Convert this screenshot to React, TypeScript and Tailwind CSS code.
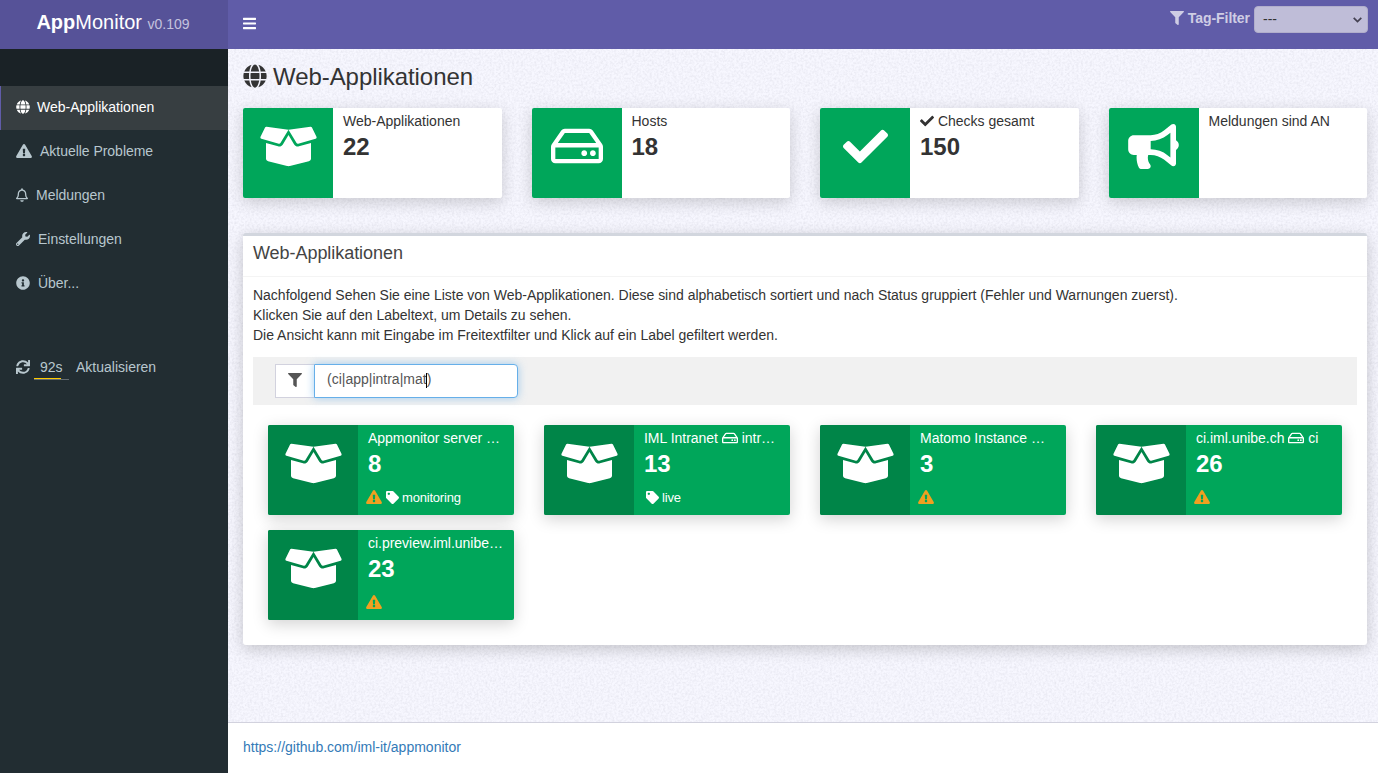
import React from "react";
import {
  FaBars, FaBoxOpen, FaBullhorn, FaCheck, FaExclamationTriangle, FaFilter,
  FaGlobe, FaInfoCircle, FaRegBell, FaRegHdd, FaSync, FaTag, FaWrench,
} from "react-icons/fa";

type Tile = { title: React.ReactNode; count: string; warn?: boolean; tag?: string };

const hdd = <FaRegHdd className="inline h-4 w-4 align-[-3px]" />;

const tiles: Tile[] = [
  { title: "Appmonitor server …", count: "8", warn: true, tag: "monitoring" },
  { title: <>IML Intranet {hdd} intr…</>, count: "13", tag: "live" },
  { title: "Matomo Instance …", count: "3", warn: true },
  { title: <>ci.iml.unibe.ch {hdd} ci</>, count: "26", warn: true },
  { title: "ci.preview.iml.unibe…", count: "23", warn: true },
];

const stats = [
  { icon: <FaBoxOpen className="h-[45px] w-[57px]" />, title: "Web-Applikationen", count: "22" },
  { icon: <FaRegHdd className="h-[52px] w-[52px]" />, title: "Hosts", count: "18" },
  { icon: <FaCheck className="h-[45px] w-[45px]" />, title: <><FaCheck className="inline h-[14px] w-[14px] align-[-2px]" /> Checks gesamt</>, count: "150" },
  { icon: <FaBullhorn className="h-[45px] w-[51px]" />, title: "Meldungen sind AN", count: "" },
];

const nav = [
  { icon: <FaGlobe className="h-[14px] w-[14px]" />, label: "Web-Applikationen", active: true },
  { icon: <FaExclamationTriangle className="h-[14px] w-4" />, label: "Aktuelle Probleme" },
  { icon: <FaRegBell className="h-[14px] w-[12px]" />, label: "Meldungen" },
  { icon: <FaWrench className="h-[14px] w-[14px]" />, label: "Einstellungen" },
  { icon: <FaInfoCircle className="h-[14px] w-[14px]" />, label: "Über..." },
];

function Texture() {
  return (
    <svg className="absolute inset-0 h-full w-full" aria-hidden="true">
      <filter id="paper" x="0" y="0" width="100%" height="100%">
        <feTurbulence type="fractalNoise" baseFrequency="0.45" numOctaves="3" seed="4" />
        <feColorMatrix values="0 0 0 0 0.68  0 0 0 0 0.68  0 0 0 0 0.76  0.9 0 0 0 -0.32" />
      </filter>
      <rect width="100%" height="100%" filter="url(#paper)" />
    </svg>
  );
}

export default function App() {
  return (
    <div className="flex h-[773px] w-[1378px] flex-col overflow-hidden bg-[#222d32] font-['Liberation_Sans',Arial,sans-serif] text-[14px] leading-5 text-[#333]">
      <header className="flex h-[49px] shrink-0 text-white">
        <div className="flex w-[228px] justify-center bg-[#565298] pr-[2px] text-[20px] leading-[45px]">
          <div className="whitespace-pre"><b>App</b>Monitor <span className="text-[14px] text-[#c4c2de]">v0.109</span></div>
        </div>
        <div className="flex flex-1 items-start justify-between bg-[#605ca8]">
          <FaBars className="ml-[15px] mt-[16px] h-[15px] w-[13px]" />
          <div className="flex items-start pr-[10px] pt-[6px]">
            <div className="flex items-center gap-[4px] pt-[2px] font-bold tracking-[-0.05px] text-[#cfcde4]">
              <FaFilter className="h-[14px] w-[14px]" />Tag-Filter
            </div>
            <div className="ml-[4px] flex h-[27px] w-[114px] items-center justify-between rounded-[4px] border border-[#b1aecb] bg-[#bfbdd8] pb-px pl-[8px] pr-[5px] text-[14px] text-[#333]">
              <span>---</span>
              <svg className="mt-[2px] h-[6px] w-[9px]" viewBox="0 0 9 6" fill="none" stroke="#444152" strokeWidth="1.7"><path d="M.7 .8 4.5 4.6 8.3 .8" /></svg>
            </div>
          </div>
        </div>
      </header>
      <div className="flex min-h-0 flex-1">
        <aside className="w-[228px] shrink-0 text-[#b8c7ce]">
          <div className="h-[37px] bg-[#1a2226]" />
          <nav>
            {nav.map((n) => (
              <div key={n.label} className={n.active
                ? "flex h-11 items-center gap-[7px] border-l border-[#605ca8] bg-[#373e41] pb-[2px] pl-[15px] text-white"
                : "flex h-11 items-center gap-[8px] pb-[2px] pl-4 tracking-[-0.03px]"}>
                {n.icon}<span>{n.label}</span>
              </div>
            ))}
          </nav>
          <div className="mt-[40px] flex h-11 items-center pb-[2px] pl-4">
            <FaSync className="h-[14px] w-[14px]" />
            <div className="relative ml-[4px] w-[35px] pl-[6px]">
              92s
              <div className="absolute -bottom-[3px] left-0 h-px w-[35px] bg-[#646c70]" />
              <div className="absolute -bottom-[2px] left-0 h-px w-[27px] bg-[#ffcc00]" />
            </div>
            <span className="ml-[7px]">Aktualisieren</span>
          </div>
        </aside>
        <div className="flex min-w-0 flex-1 flex-col">
          <main className="relative flex-1 bg-[#f7f7ff]">
            <Texture />
            <div className="relative pl-[15px] pr-[11px] pt-[15px]">
              <h1 className="flex h-[26px] items-center gap-[6px] text-[24px] leading-[26px] tracking-[-0.06px]">
                <FaGlobe className="mb-[2px] h-6 w-6" />Web-Applikationen
              </h1>
              <section className="mt-[18px] grid grid-cols-4 gap-[30px]">
                {stats.map((s, i) => (
                  <div key={i} className="flex h-[90px] overflow-hidden rounded-[2px] bg-white shadow-[0_4px_16px_rgba(0,0,0,0.18)]">
                    <div className="flex w-[90px] shrink-0 justify-center bg-[#00a65a] text-white">
                      <div className="flex h-[76px] items-center">{s.icon}</div>
                    </div>
                    <div className="px-[10px] pt-[3px]">
                      <div className="whitespace-nowrap">{s.title}</div>
                      <div className="pt-[3px] text-[24px] font-bold leading-[26px]">{s.count}</div>
                    </div>
                  </div>
                ))}
              </section>
              <section className="mt-[35px] h-[412px] rounded-[3px] border-t-[3px] border-[#d2d6de] bg-white shadow-[0_4px_16px_rgba(0,0,0,0.2)]">
                <h2 className="h-[41px] border-b border-[#f4f4f4] pl-[10px] pt-[7px] text-[18px] leading-5 tracking-[-0.05px] text-[#444]">Web-Applikationen</h2>
                <div className="px-[10px] pt-[8px]">
                  <p className="tracking-[-0.014px]">Nachfolgend Sehen Sie eine Liste von Web-Applikationen. Diese sind alphabetisch sortiert und nach Status gruppiert (Fehler und Warnungen zuerst).<br />Klicken Sie auf den Labeltext, um Details zu sehen.<br />Die Ansicht kann mit Eingabe im Freitextfilter und Klick auf ein Label gefiltert werden.</p>
                  <div className="mt-[12px] flex h-12 bg-[#f1f1f1] pl-[22px] pt-[7px]">
                    <div className="flex h-[34px] w-[39px] items-center justify-center border border-r-0 border-[#d2d2de] bg-white pb-[3px] text-[#555]"><FaFilter className="h-[14px] w-[14px]" /></div>
                    <div className="flex h-[34px] w-[204px] items-center rounded-r-[4px] border border-[#66afe9] bg-white pb-[4px] pl-[12px] text-[#555] shadow-[0_0_8px_rgba(102,175,233,0.6)]">
                      (ci|app|intra|mat<span className="-ml-px mt-[3px] h-[15px] w-px bg-black" />)
                    </div>
                  </div>
                  <div className="mt-5 grid grid-cols-4 gap-x-[30px] gap-y-[15px] px-[15px]">
                    {tiles.map((t) => (
                      <div key={t.count} className="flex h-[90px] overflow-hidden rounded-[2px] bg-[#00a65a] text-white shadow-[0_4px_16px_rgba(0,0,0,0.18)]">
                        <div className="flex w-[90px] shrink-0 justify-center bg-[#008548]">
                          <div className="flex h-[76px] items-center"><FaBoxOpen className="h-[45px] w-[57px]" /></div>
                        </div>
                        <div className="whitespace-nowrap pl-[10px] pt-[3px]">
                          <div className="tracking-[-0.02px]">{t.title}</div>
                          <div className="pt-[3px] text-[24px] font-bold leading-[26px]">{t.count}</div>
                          <div className="-ml-[2px] mt-[11px] flex h-5 items-center text-[13px] leading-5 tracking-[-0.2px]">
                            {t.warn && <FaExclamationTriangle className="mb-[2px] h-[14px] w-4 text-[#f0a020]" />}
                            {t.tag && <><FaTag className="mb-px ml-[4px] mr-[3px] h-[13px] w-[13px]" />{t.tag}</>}
                          </div>
                        </div>
                      </div>
                    ))}
                  </div>
                </div>
              </section>
            </div>
          </main>
          <footer className="h-[51px] shrink-0 border-t border-[#d2d2de] bg-white pl-[15px] pt-[14px] text-[#337ab7]">https://github.com/iml-it/appmonitor</footer>
        </div>
      </div>
    </div>
  );
}
